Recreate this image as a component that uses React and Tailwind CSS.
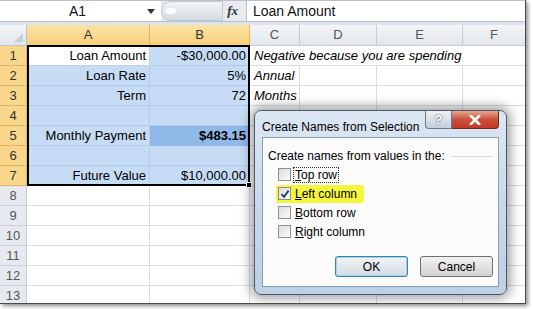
import React from 'react';

const gridLine = 'border-[#d9dde3]';

const Cell = ({ children, className = '' }) => (
  <div className={`h-[20px] border-r border-b flex items-center px-[3px] whitespace-nowrap ${className}`}>
    {children}
  </div>
);

const Check = ({ checked }) => (
  <span className="w-[13px] h-[13px] border border-[#8e8f8f] bg-gradient-to-br from-[#dcdcdc] to-[#fbfbfb] flex items-center justify-center shrink-0">
    {checked && (
      <svg width="10" height="10" viewBox="0 0 10 10">
        <path d="M1.5 5.2 L4 7.8 L8.6 1.6" fill="none" stroke="#2a3a5c" strokeWidth="1.8" />
      </svg>
    )}
  </span>
);

const Option = ({ checked, keyChar, rest, highlight, focus }) => (
  <div className="h-[19px] flex items-center">
    <div className={`flex items-center gap-[3px] pl-[2px] pr-[6px] h-[18px] rounded-[3px] ${highlight ? 'bg-[#f4f53c]' : ''}`}>
      <Check checked={checked} />
      <span className={`leading-[14px] px-[1px] ${focus ? 'outline outline-1 outline-dotted outline-[#333]' : ''}`}>
        <span className="underline">{keyChar}</span>
        {rest}
      </span>
    </div>
  </div>
);

const rows = [
  { n: 1, a: 'Loan Amount', b: '-$30,000.00', c: 'Negative because you are spending' },
  { n: 2, a: 'Loan Rate', b: '5%', c: 'Annual' },
  { n: 3, a: 'Term', b: '72', c: 'Months' },
  { n: 4 },
  { n: 5, a: 'Monthly Payment', b: '$483.15', bold: true },
  { n: 6 },
  { n: 7, a: 'Future Value', b: '$10,000.00' },
  { n: 8 },
  { n: 9 },
  { n: 10 },
  { n: 11 },
  { n: 12 },
  { n: 13 },
];

export default function App() {
  return (
    <div className="w-[533px] h-[309px] bg-white overflow-hidden" style={{ fontFamily: '"Liberation Sans", Arial, sans-serif' }}>
      <div className="relative w-[526px] h-[304px] border-r border-b border-[#4a4a4a] shadow-[2px_2px_4px_rgba(0,0,0,0.45)] bg-white overflow-hidden">
        {/* formula bar */}
        <div className="h-[22px] flex border-t border-b border-[#b9c1cb] bg-white">
          <div className="w-[161px] flex items-center">
            <span className="flex-1 text-center text-[14px] text-[#111] pl-[8px]">A1</span>
            <svg width="8" height="5" viewBox="0 0 8 5" className="mr-[6px]">
              <path d="M0 0 H8 L4 5 Z" fill="#333" />
            </svg>
          </div>
          <div className="w-[86px] bg-[#e7eaee] flex items-center pr-[8px] border-r border-[#b9c1cb]">
            <div className="h-[20px] w-[62px] rounded-l-full bg-gradient-to-b from-[#f3f5f7] to-[#d6dbe1] border border-[#c2c8cf] flex items-center pl-[4px]">
              <span className="w-[10px] h-[6px] rounded-full bg-[#fbfcfd]" />
            </div>
            <span className="ml-auto text-[13px] italic font-bold text-[#333]" style={{ fontFamily: '"Liberation Serif", serif' }}>fx</span>
          </div>
          <div className="flex-1 flex items-center pl-[6px] text-[14px] text-[#111]">Loan Amount</div>
        </div>
        <div className="h-[3px] bg-[#dfe4ea]" />

        {/* grid */}
        <div className="grid grid-cols-[27px_123px_100px_50px_77px_86px_63px] text-[13px] text-black">
          <div className="h-[21px] border-r border-b border-[#bcc4cd] bg-gradient-to-b from-[#f3f5f7] to-[#e2e6eb] relative">
            <span className="absolute right-[3px] bottom-[3px] w-0 h-0 border-l-[9px] border-l-transparent border-b-[9px] border-b-[#c9ced4]" />
          </div>
          {['A', 'B'].map((c) => (
            <div key={c} className="h-[21px] border-r border-b border-[#e0b35f] bg-gradient-to-b from-[#fbe3a4] to-[#f6cf79] flex items-center justify-center text-[#333]">{c}</div>
          ))}
          {['C', 'D', 'E', 'F'].map((c) => (
            <div key={c} className="h-[21px] border-r border-b border-[#c5ccd5] bg-gradient-to-b from-[#f3f5f7] to-[#e2e6eb] flex items-center justify-center text-[#555]">{c}</div>
          ))}

          {rows.map((r) => {
            const sel = r.n <= 7;
            return (
              <React.Fragment key={r.n}>
                <div className={`h-[20px] border-r border-b flex items-center justify-center text-[13px] ${sel ? 'bg-[#f8d68b] border-[#e2b763] text-[#333]' : 'bg-[#e6eaf0] border-[#c9d0d8] text-[#555]'}`}>
                  {r.n}
                </div>
                <Cell className={`justify-end ${r.n === 1 ? 'bg-white border-[#bcd1ea]' : sel ? 'bg-[#c6dcf5] border-[#b4cceb]' : `bg-white ${gridLine}`}`}>{r.a}</Cell>
                <Cell className={`justify-end ${r.n === 5 ? 'bg-[#8fb9e8] border-[#8fb9e8] font-bold' : sel ? 'bg-[#c6dcf5] border-[#b4cceb]' : `bg-white ${gridLine}`}`}>{r.b}</Cell>
                {r.n === 1 ? (
                  <Cell className={`col-span-4 italic pl-[4px] bg-white ${gridLine}`}>{r.c}</Cell>
                ) : (
                  <>
                    <Cell className={`italic pl-[4px] overflow-visible bg-white ${gridLine}`}>{r.c}</Cell>
                    <Cell className={`bg-white ${gridLine}`} />
                    <Cell className={`bg-white ${gridLine}`} />
                    <Cell className={`bg-white ${gridLine}`} />
                  </>
                )}
              </React.Fragment>
            );
          })}
        </div>

        {/* selection border A1:B7 */}
        <div className="absolute left-[27px] top-[45px] w-[223px] h-[141px] border-2 border-black pointer-events-none">
          <span className="absolute -right-[4px] -bottom-[4px] w-[6px] h-[6px] bg-black border border-white" />
        </div>

        {/* dialog */}
        <div className="absolute left-[254px] top-[110px] w-[253px] h-[185px] rounded-[7px] border border-[#4e5866] bg-gradient-to-b from-[#dce7f3] via-[#c8d9ec] to-[#bcd0e6] shadow-[0_0_12px_3px_rgba(0,0,0,0.4)] text-[12px] text-black">
          <div className="h-[26px] flex items-start">
            <span className="pl-[7px] pt-[7px]">Create Names from Selection</span>
            <div className="ml-auto mr-[7px] flex">
              <div className="w-[27px] h-[18px] rounded-bl-[4px] border border-t-0 border-[#6d7a8a] bg-gradient-to-b from-[#eef2f6] to-[#c4cfdb] flex items-center justify-center text-[13px] text-[#fff] font-bold" style={{ textShadow: '0 0 2px #334' }}>?</div>
              <div className="w-[47px] h-[18px] rounded-br-[4px] border border-l-0 border-t-0 border-[#6b2a22] bg-gradient-to-b from-[#e8a593] via-[#c9503c] to-[#c23a24] flex items-center justify-center">
                <svg width="12" height="10" viewBox="0 0 12 10">
                  <path d="M2 1 L10 9 M10 1 L2 9" stroke="#fff" strokeWidth="2.6" strokeLinecap="square" />
                  <path d="M2 1 L10 9 M10 1 L2 9" stroke="#fff" strokeWidth="1.6" />
                </svg>
              </div>
            </div>
          </div>
          <div className="mx-[7px] h-[150px] border border-[#8b9db2] bg-[#fbfbfb] px-[5px] pt-[10px]">
            <div className="flex items-center gap-[6px] h-[16px]">
              <span>Create names from values in the:</span>
              <span className="flex-1 border-t border-[#d5dbe2]" />
            </div>
            <div className="pl-[8px] mt-[1px]">
              <Option keyChar="T" rest="op row" focus />
              <Option checked highlight keyChar="L" rest="eft column" />
              <Option keyChar="B" rest="ottom row" />
              <Option keyChar="R" rest="ight column" />
            </div>
            <div className="flex justify-end gap-[12px] mt-[15px]">
              <div className="w-[73px] h-[21px] rounded-[3px] border border-[#3c7fb1] bg-gradient-to-b from-[#f2f4f6] to-[#d3dbe2] shadow-[inset_0_0_0_1px_#9fd6f2] flex items-center justify-center">OK</div>
              <div className="w-[73px] h-[21px] rounded-[3px] border border-[#707070] bg-gradient-to-b from-[#f2f2f2] to-[#d2d2d2] flex items-center justify-center">Cancel</div>
            </div>
          </div>
        </div>
      </div>
    </div>
  );
}
